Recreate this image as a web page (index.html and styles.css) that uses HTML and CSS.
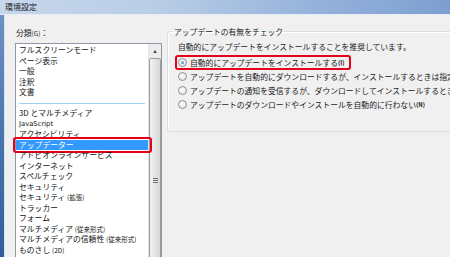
FILE: index.html
```html
<!DOCTYPE html>
<html lang="ja">
<head>
    <meta charset="UTF-8">
    <meta name="viewport" content="width=device-width, initial-scale=1.0">
    <title>環境設定</title>
    <link rel="stylesheet" href="styles.css">
</head>
<body>
    <div class="window">
        <div class="titlebar">環境設定</div>
        <div class="frame">
            <div class="edge"></div>
            <div class="client">
                <div class="categories">
                    <div class="field-label">分類<span class="key">(G)</span>：</div>
                    <div class="listbox">
                        <ul class="items">
                            <li>フルスクリーンモード</li>
                            <li>ページ表示</li>
                            <li>一般</li>
                            <li>注釈</li>
                            <li>文書</li>
                            <li class="divider"></li>
                            <li>3D とマルチメディア</li>
                            <li class="latin">JavaScript</li>
                            <li>アクセシビリティ</li>
                            <li class="selected">アップデーター</li>
                            <li>アドビオンラインサービス</li>
                            <li>インターネット</li>
                            <li>スペルチェック</li>
                            <li>セキュリティ</li>
                            <li>セキュリティ <span class="small">(拡張)</span></li>
                            <li>トラッカー</li>
                            <li>フォーム</li>
                            <li>マルチメディア <span class="small">(従来形式)</span></li>
                            <li>マルチメディアの信頼性 <span class="small">(従来形式)</span></li>
                            <li>ものさし <span class="small">(2D)</span></li>
                        </ul>
                        <div class="scrollbar">
                            <div class="arrow"></div>
                            <div class="thumb"><span class="grip"></span></div>
                        </div>
                    </div>
                </div>
                <div class="settings">
                    <fieldset class="group">
                        <legend>アップデートの有無をチェック</legend>
                        <div class="group-body">
                            <p class="note">自動的にアップデートをインストールすることを推奨しています。</p>
                            <label class="option"><span class="flagged"><span class="radio on"></span>自動的にアップデートをインストールする<span class="key">(I)</span></span></label>
                            <label class="option"><span class="radio"></span>アップデートを自動的にダウンロードするが、インストールするときは指定する<span class="key">(D)</span></label>
                            <label class="option"><span class="radio"></span>アップデートの通知を受信するが、ダウンロードしてインストールするときは指定する<span class="key">(A)</span></label>
                            <label class="option"><span class="radio"></span>アップデートのダウンロードやインストールを自動的に行わない<span class="key">(N)</span></label>
                        </div>
                    </fieldset>
                </div>
            </div>
        </div>
    </div>
</body>
</html>
```

FILE: styles.css
```css
body {
    margin: 0;
    padding: 0;
    font-family: "Noto Sans CJK JP", "Noto Sans", sans-serif;
    font-size: 7.8px;
    color: #1a1a1a;
    background-color: #f0f0f0;
}

.window {
    width: 450px;
    height: 257px;
    overflow: hidden;
    display: flex;
    flex-direction: column;
}

.titlebar {
    height: 14px;
    line-height: 14px;
    padding-left: 5px;
    font-size: 8px;
    color: #1e1e1e;
    background: linear-gradient(to right, #c6d7ec 0%, #b9cde6 35%, #95b2db 70%, #7d9fd0 100%);
    border-bottom: 1px solid #e6edf6;
}

.frame {
    flex: 1;
    display: flex;
    min-height: 0;
}

.edge {
    flex-shrink: 0;
    width: 4px;
    background: linear-gradient(to bottom, #6d92c4 0%, #4a74ae 50%, #2f5d9c 100%);
    border-right: 1px solid #dbe5f1;
}

.client {
    flex: 1;
    min-width: 0;
    display: flex;
    overflow: hidden;
    background-color: #f0f0f0;
}

/* left column: category list */
.categories {
    flex-shrink: 0;
    width: 147px;
    padding-left: 10px;
    display: flex;
    flex-direction: column;
}

.field-label {
    padding-top: 12px;
    padding-left: 1px;
    line-height: 12px;
}

.field-label .key {
    font-size: 6.5px;
}

.listbox {
    flex: 1;
    margin-top: 4px;
    display: flex;
    background-color: #fff;
    border: 1px solid #8e98a4;
    border-bottom: none;
}

.items {
    list-style: none;
    margin: 0;
    padding: 1px 0 0 0;
    width: 132px;
    flex-shrink: 0;
}

.items li {
    position: relative;
    height: 10.5px;
    line-height: 10.5px;
    padding-left: 3px;
    white-space: nowrap;
    color: #111;
}

.items li.latin {
    font-family: "DejaVu Sans", sans-serif;
    font-size: 6.8px;
}

.items .small {
    font-size: 6.5px;
}

.items li.divider {
    height: 1px;
    margin: 5px 3px 4.5px 3px;
    padding: 0;
    background-color: #9dd1f2;
}

.items li.selected {
    background-color: #3399ff;
    color: #fff;
}

/* red annotation frame */
.items li.selected::after {
    content: "";
    position: absolute;
    left: -3px;
    right: -4px;
    top: -3px;
    bottom: -3px;
    border: 2.5px solid #e5001c;
    border-radius: 3px;
}

.scrollbar {
    flex: 1;
    background-color: #ececec;
    border-left: 1px solid #e2e2e2;
    display: flex;
    flex-direction: column;
    align-items: center;
}

.arrow {
    height: 14px;
    width: 100%;
    display: flex;
    align-items: center;
    justify-content: center;
}

.arrow::before {
    content: "";
    border-left: 2.5px solid transparent;
    border-right: 2.5px solid transparent;
    border-bottom: 3px solid #4d4d4d;
}

.thumb {
    flex-shrink: 0;
    width: 10px;
    height: 244px;
    border: 1px solid #9c9c9c;
    border-radius: 2px;
    background: linear-gradient(to right, #f2f2f2, #e2e2e2 60%, #d6d6d6);
    display: flex;
    align-items: center;
    justify-content: center;
}

.grip {
    width: 5px;
    height: 6px;
    background: repeating-linear-gradient(to bottom, #6f6f6f 0, #6f6f6f 1px, #e8e8e8 1px, #e8e8e8 2px);
}

/* right column: update settings */
.settings {
    flex-shrink: 0;
    margin-left: 5px;
}

.group {
    margin: 10.5px 0 0 0;
    padding: 0 0 20px 5px;
    width: 330px;
    border: 1px solid #d5dfe5;
    border-radius: 3px;
    box-shadow: inset 1px 1px 0 #fff;
}

.group legend {
    padding: 0 1px;
    line-height: 11px;
}

.group-body {
    padding-left: 5px;
    white-space: nowrap;
}

.note {
    margin: 4px 0 3.5px 0;
    line-height: 11px;
}

.option {
    display: flex;
    align-items: center;
    height: 14px;
}

.option .key {
    font-size: 6px;
    font-weight: bold;
}

.flagged {
    position: relative;
    display: flex;
    align-items: center;
    height: 14px;
}

.flagged::after {
    content: "";
    position: absolute;
    left: -3px;
    right: -6px;
    top: 0;
    bottom: -1px;
    border: 2.5px solid #e5001c;
    border-radius: 3px;
}

.radio {
    flex-shrink: 0;
    width: 7px;
    height: 7px;
    margin-right: 3px;
    border: 1px solid #8f8f8f;
    border-radius: 50%;
    background: radial-gradient(circle at 40% 40%, #ffffff, #dcdcdc);
    box-sizing: content-box;
    position: relative;
}

.radio.on::after {
    content: "";
    position: absolute;
    left: 2px;
    top: 2px;
    width: 3px;
    height: 3px;
    border-radius: 50%;
    background: radial-gradient(circle at 40% 40%, #8fd0f0, #1b6a9c);
}
```
